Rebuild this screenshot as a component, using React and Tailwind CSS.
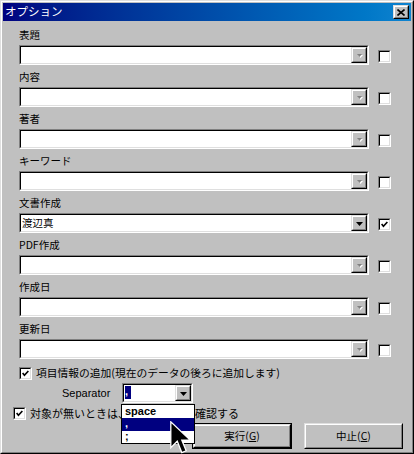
import React from 'react'

const jp = "font-['Noto_Sans_CJK_JP',sans-serif]"

const Sunken = ({ className = '', children }) => (
  <div className={`border border-t-[#808080] border-l-[#808080] border-r-white border-b-white ${className}`}>
    <div className="w-full h-full border border-t-black border-l-black border-r-[#dfdfdf] border-b-[#dfdfdf] bg-white flex">
      {children}
    </div>
  </div>
)

const Raised = ({ className = '', children }) => (
  <div className={`border border-t-[#dfdfdf] border-l-[#dfdfdf] border-r-black border-b-black bg-[#c0c0c0] ${className}`}>
    <div className="w-full h-full border border-t-white border-l-white border-r-[#808080] border-b-[#808080] flex items-center justify-center">
      {children}
    </div>
  </div>
)

const Arrow = ({ enabled }) =>
  enabled ? (
    <svg width="7" height="4" viewBox="0 0 7 4" className="mt-px">
      <path d="M0 0h7L3.5 4z" fill="#000" />
    </svg>
  ) : (
    <svg width="7" height="5" viewBox="0 0 7 5" className="mt-px">
      <path d="M2 2h5L4.5 5z" fill="#fff" />
      <path d="M1 1h5L3.5 4z" fill="#808080" />
    </svg>
  )

const Check = () => (
  <svg width="11" height="11" viewBox="0 0 11 11">
    <polyline points="2,5 4.2,7.7 9,2.5" fill="none" stroke="#000" strokeWidth="2" />
  </svg>
)

const Checkbox = ({ checked, className = '' }) => (
  <Sunken className={`w-[13px] h-[13px] shrink-0 ${className}`}>
    <div className="w-full h-full flex items-center justify-center">{checked && <Check />}</div>
  </Sunken>
)

const fields = [
  { label: '表題' },
  { label: '内容' },
  { label: '著者' },
  { label: 'キーワード' },
  { label: '文書作成', value: '渡辺真', checked: true },
  { label: 'PDF作成' },
  { label: '作成日' },
  { label: '更新日' },
]

// mouse pointer sitting over the open list
const Cursor = () => (
  <svg width="21" height="34" viewBox="0 0 13 21" className="absolute left-[170px] top-[421px] z-20">
    <path
      d="M0.5 0.5V16.5L4.5 12.5L7.3 19.5L10 18.4L7.3 11.8H12.5Z"
      fill="#000"
      stroke="#fff"
      strokeWidth="0.8"
    />
  </svg>
)

export default function App() {
  return (
    <div className={`w-[414px] h-[454px] overflow-hidden relative ${jp} text-black`}>
      <div className="w-full h-full bg-[#c0c0c0] border border-t-[#dfdfdf] border-l-[#dfdfdf] border-r-black border-b-black">
        <div className="w-full h-full border border-t-white border-l-white border-r-[#808080] border-b-[#808080] p-px flex flex-col">
          {/* Title bar */}
          <div className="h-[18px] shrink-0 flex items-center justify-between bg-gradient-to-r from-[#000080] to-[#1084d0] px-[2px]">
            <span className="text-white text-[11.5px] leading-none">オプション</span>
            <Raised className="w-[16px] h-[14px]">
              <svg width="8" height="7" viewBox="0 0 8 7">
                <path d="M0.5 0.5L7.5 6.5M7.5 0.5L0.5 6.5" stroke="#000" strokeWidth="1.6" />
              </svg>
            </Raised>
          </div>

          {/* Fields */}
          <div className="pt-[7px] pl-[16px] flex flex-col">
            {fields.map((f) => (
              <div key={f.label} className="flex flex-col pb-[5px]">
                <div className="h-[14px] leading-[14px] text-[10.5px]">{f.label}</div>
                <div className="mt-[3px] flex items-center">
                  <Sunken className="w-[350px] h-[20px]">
                    <div className="flex-1 pl-[1px] text-[10.5px] leading-[16px]">{f.value}</div>
                    <Raised className="w-[16px] h-full">
                      <Arrow enabled={!!f.value} />
                    </Raised>
                  </Sunken>
                  <Checkbox checked={f.checked} className="ml-[9px] mt-[3px]" />
                </div>
              </div>
            ))}

            <div className="mt-[3px] flex items-center h-[13px]">
              <Checkbox checked />
              <span className="ml-[4px] text-[10.75px] leading-none">項目情報の追加(現在のデータの後ろに追加します)</span>
            </div>

            <div className="mt-[3px] flex items-center h-[20px]">
              <span className="ml-[43px] w-[60px] font-['Liberation_Sans',sans-serif] text-[11px] leading-none">Separator</span>
              <div className="relative">
                <Sunken className="w-[71px] h-[20px]">
                  <div className="flex-1 pl-px pt-px">
                    <div className="w-[6px] h-[13px] bg-[#000080] text-white font-['Liberation_Sans',sans-serif] font-bold text-[11px] leading-[11px]">,</div>
                  </div>
                  <Raised className="w-[16px] h-full">
                    <Arrow enabled />
                  </Raised>
                </Sunken>
                <div className="absolute left-[-1px] top-[21px] w-[74px] h-[40px] bg-white border border-black z-10 font-['Liberation_Sans',sans-serif] font-bold text-[11px]">
                  <div className="h-[13px] leading-[13px] pl-[3px]">space</div>
                  <div className="h-[13px] leading-[10px] pl-[3px] bg-[#000080] text-white">,</div>
                  <div className="h-[13px] leading-[11px] pl-[3px]">;</div>
                </div>
              </div>
            </div>

            <div className="mt-[4px] -ml-[6px] flex items-center h-[13px]">
              <Checkbox checked />
              <span className="ml-[4px] text-[11px] leading-none">対象が無いときは、ダイアログで確認する</span>
            </div>

            <div className="mt-[3px] flex justify-end pr-[8px] gap-[12px] text-[10.5px]">
              <div className="border border-black">
                <Raised className="w-[98px] h-[24px]">
                  <span>
                    実行(<span className="underline">G</span>)
                  </span>
                </Raised>
              </div>
              <Raised className="w-[99px] h-[26px]">
                <span>
                  中止(<span className="underline">C</span>)
                </span>
              </Raised>
            </div>
          </div>
        </div>
      </div>
      <Cursor />
    </div>
  )
}
